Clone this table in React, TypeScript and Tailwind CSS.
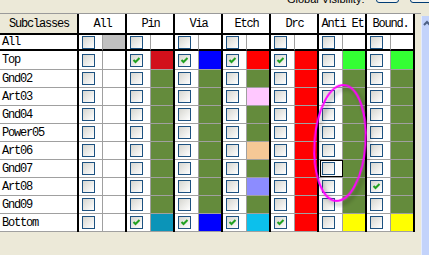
import React from "react";

// layer visibility grid, one row per subclass
const G = "#648b3c";
const R = "#ff0000";

type Cell = { color?: string; checked?: boolean; focus?: boolean };

const groups = ["All", "Pin", "Via", "Etch", "Drc", "Anti Et", "Bound."];

const plain = (c: string[]): Cell[] => c.map((color) => ({ color }));

const rows: { label: string; cells: Cell[] }[] = [
  { label: "Top", cells: [{}, { color: "#d2101b", checked: true }, { color: "#0000ff", checked: true }, { color: R, checked: true }, { color: R, checked: true }, { color: "#33ff33" }, { color: "#33ff33" }] },
  { label: "Gnd02", cells: plain(["", G, G, G, R, G, G]) },
  { label: "Art03", cells: plain(["", G, G, "#ffc8ff", R, G, G]) },
  { label: "Gnd04", cells: plain(["", G, G, G, R, G, G]) },
  { label: "Power05", cells: plain(["", G, G, G, R, G, G]) },
  { label: "Art06", cells: plain(["", G, G, "#f5c896", R, G, G]) },
  { label: "Gnd07", cells: [{}, { color: G }, { color: G }, { color: G }, { color: R }, { color: G, focus: true }, { color: G }] },
  { label: "Art08", cells: [{}, { color: G }, { color: G }, { color: "#8c8cff" }, { color: R }, { color: G }, { color: G, checked: true }] },
  { label: "Gnd09", cells: plain(["", G, G, G, R, G, G]) },
  { label: "Bottom", cells: [{}, { color: "#0b94b8", checked: true }, { color: "#0000ff", checked: true }, { color: "#0cc0ec", checked: true }, { color: R, checked: true }, { color: "#ffff00" }, { color: "#ffff00" }] },
];

const CheckBox = ({ checked }: { checked?: boolean }) => (
  <div className="w-[13px] h-[13px] shrink-0 border border-[#1c5180] bg-linear-to-br from-[#d6d6d0] to-white">
    {checked && (
      <svg width="11" height="11" viewBox="0 0 11 11">
        <path d="M2.5 5 L4.5 7 L8.5 3" fill="none" stroke="#21a121" strokeWidth="2" />
      </svg>
    )}
  </div>
);

const GridRow = ({ label, cells, h, thick }: { label: string; cells: Cell[]; h: string; thick?: boolean }) => {
  const line = thick ? "border-b-2 border-b-black" : "border-b border-b-[#a0a0a0]";
  return (
    <div className={`flex w-[415px] border-r-2 border-black ${h}`}>
      <div className={`w-[77px] shrink-0 bg-white pl-[2px] flex items-center ${line}`}>{label}</div>
      {cells.map((c, i) => (
        <div key={i} className="flex w-[48px] shrink-0 border-l-2 border-black">
          <div className={`relative w-[23px] shrink-0 bg-white pl-[3px] flex items-center ${line}`}>
            <CheckBox checked={c.checked} />
            {c.focus && <div className="absolute left-[1px] right-[-1px] top-0 bottom-0 border border-black" />}
          </div>
          <div
            className={`flex-1 border-l border-l-[#a0a0a0] ${line}`}
            style={{ backgroundColor: c.color || "#ffffff" }}
          />
        </div>
      ))}
    </div>
  );
};

export default function App() {
  return (
    <div className="relative w-[429px] h-[255px] overflow-hidden bg-[#ece9d8] text-black">
      {/* clipped global visibility strip */}
      <div className="h-[13px] overflow-hidden flex items-start pl-[287px] font-['Liberation_Sans',Arial,sans-serif] text-[11px] leading-[13px]">
        <div className="w-[89px] shrink-0 -mt-[7px]">Global Visibility:</div>
        <div className="w-[23px] h-[21px] shrink-0 -mt-[18px] rounded-[3px] border border-[#003c74] bg-[#f4f4f0] text-center leading-[19px]">On</div>
        <div className="w-[40px] h-[21px] shrink-0 -mt-[18px] ml-[11px] rounded-[3px] border border-[#003c74] bg-[#f4f4f0] text-center leading-[19px]">Off</div>
      </div>

      <div className="flex">
        <div className="flex flex-col w-[421px] border-t border-t-[#9a9a9a] font-['Liberation_Mono','Courier_New',monospace] text-[12px] tracking-[-1.2px] leading-[12px]">
          {/* header */}
          <div className="flex w-[415px] h-[21px] border-r-2 border-black">
            <div className="w-[77px] shrink-0 bg-[#ece9d8] border-b-2 border-b-black flex items-center justify-center pl-[1px]">Subclasses</div>
            {groups.map((g) => (
              <div key={g} className="w-[48px] shrink-0 bg-white border-l-2 border-black border-b-2 border-b-black flex items-center justify-center whitespace-nowrap pl-[1px]">
                {g}
              </div>
            ))}
          </div>
          <GridRow label="All" h="h-[16px]" thick cells={[{ color: "#c0c0c0" }, {}, {}, {}, {}, {}, {}]} />
          {rows.map((r, i) => (
            <GridRow key={r.label} label={r.label} cells={r.cells} h={i === 0 ? "h-[19px]" : "h-[18px]"} />
          ))}
        </div>

        {/* scrollbar edge */}
        <div className="relative mt-[3px] w-[8px] h-[239px] bg-[#c3d3fb] border-l border-l-[#e4ebfd]">
          <svg className="absolute left-[1px] top-[3px]" width="7" height="8" viewBox="0 0 7 8">
            <path d="M1 6 L4 3 L7 6" fill="none" stroke="#4d6185" strokeWidth="2" />
          </svg>
        </div>
      </div>

      {/* magenta annotation */}
      <svg className="absolute left-[308px] top-[80px]" width="66" height="128" viewBox="0 0 66 128">
        <defs>
          <filter id="sh" x="-20%" y="-20%" width="140%" height="140%">
            <feDropShadow dx="3" dy="3" stdDeviation="2" floodColor="#000" floodOpacity="0.35" />
          </filter>
        </defs>
        <ellipse cx="32" cy="63" rx="25.5" ry="58" fill="none" stroke="#ff00ff" strokeWidth="2" filter="url(#sh)" transform="rotate(4 32 63)" />
      </svg>
    </div>
  );
}
